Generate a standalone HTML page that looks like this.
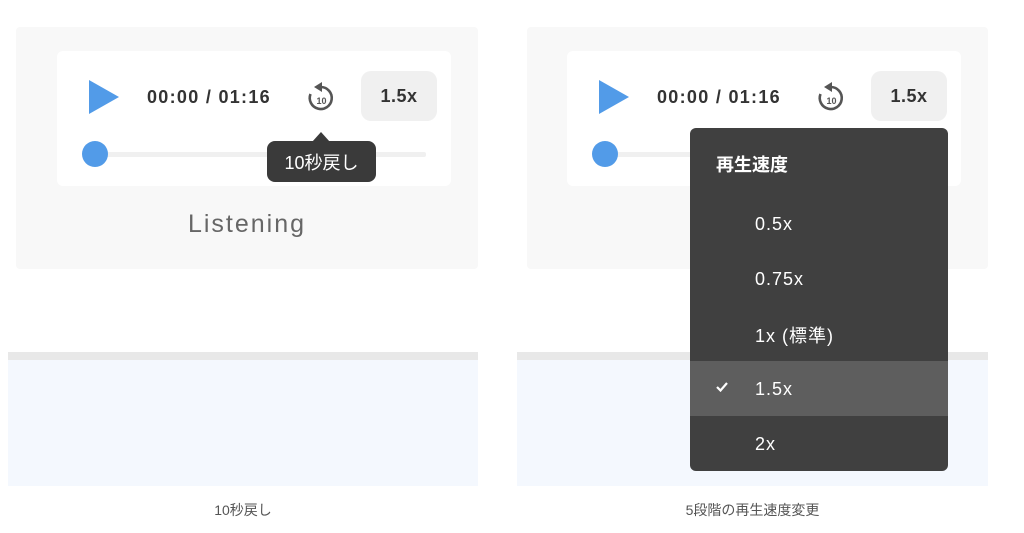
<!DOCTYPE html>
<html><head><meta charset="utf-8"><style>
*{margin:0;padding:0;box-sizing:border-box}
body{width:1024px;height:533px;background:#fff;position:relative;overflow:hidden;font-family:"Liberation Sans","Noto Sans CJK JP",sans-serif}
.a{position:absolute}
.outer{background:#f8f8f8;border-radius:4px}
.card{background:#fff;border-radius:6px}
.time{font-weight:bold;font-size:18px;color:#333;white-space:nowrap;letter-spacing:1.3px}
.spd{background:#f0f0f0;border-radius:10px;font-weight:bold;font-size:18px;color:#333;display:flex;align-items:center;justify-content:center;letter-spacing:0.5px}
.track{background:#f0f0f0;height:5px;border-radius:2px}
.thumb{width:26px;height:26px;border-radius:50%;background:#529be8}
.cap{font-size:14px;color:#555;text-align:center}
.menu{background:#404040;border-radius:6px;color:#fff}
.it{position:absolute;left:65px;font-size:18px;letter-spacing:1px}
</style></head><body>
<!-- left -->
<div class="a outer" style="left:16px;top:27px;width:462px;height:242px"></div>
<div class="a card" style="left:57px;top:51px;width:394px;height:135px"></div>
<svg class="a" style="left:88px;top:80px" width="31" height="35"><polygon points="1,0 31,17 1,34" fill="#529be8"/></svg>
<div class="a time" style="left:147px;top:87px">00:00 / 01:16</div>
<svg class="a" style="left:305px;top:81px" width="32" height="32" viewBox="0 0 32 32"><path d="M16 6 A11 11 0 1 1 5.5 13" fill="none" stroke="#555" stroke-width="2.6"/><polygon points="9,6 17,1 17,11" fill="#555"/><text x="16.5" y="23" font-size="9" font-weight="bold" fill="#555" text-anchor="middle" font-family="Liberation Sans">10</text></svg>
<div class="a spd" style="left:361px;top:71px;width:76px;height:50px">1.5x</div>
<div class="a track" style="left:95px;top:152px;width:331px"></div>
<div class="a thumb" style="left:82px;top:141px"></div>
<svg class="a" style="left:312px;top:132px" width="18" height="10"><polygon points="9,0 18,10 0,10" fill="#3a3a3a"/></svg>
<div class="a" style="left:267px;top:141px;width:109px;height:41px;background:#3a3a3a;border-radius:8px;color:#fff;font-size:18px;display:flex;align-items:center;justify-content:center">10秒戻し</div>
<div class="a" style="left:16px;top:210px;width:462px;text-align:center;font-size:25px;color:#666;letter-spacing:2px">Listening</div>
<div class="a" style="left:8px;top:352px;width:470px;height:8px;background:#e8e8e8"></div>
<div class="a" style="left:8px;top:360px;width:470px;height:126px;background:#f4f8fe"></div>
<div class="a cap" style="left:8px;top:500px;width:470px">10秒戻し</div>
<!-- right -->
<div class="a outer" style="left:527px;top:27px;width:461px;height:242px"></div>
<div class="a card" style="left:567px;top:51px;width:394px;height:135px"></div>
<svg class="a" style="left:598px;top:80px" width="31" height="35"><polygon points="1,0 31,17 1,34" fill="#529be8"/></svg>
<div class="a time" style="left:657px;top:87px">00:00 / 01:16</div>
<svg class="a" style="left:815px;top:81px" width="32" height="32" viewBox="0 0 32 32"><path d="M16 6 A11 11 0 1 1 5.5 13" fill="none" stroke="#555" stroke-width="2.6"/><polygon points="9,6 17,1 17,11" fill="#555"/><text x="16.5" y="23" font-size="9" font-weight="bold" fill="#555" text-anchor="middle" font-family="Liberation Sans">10</text></svg>
<div class="a spd" style="left:871px;top:71px;width:76px;height:50px">1.5x</div>
<div class="a track" style="left:605px;top:152px;width:331px"></div>
<div class="a thumb" style="left:592px;top:141px"></div>
<div class="a" style="left:517px;top:352px;width:471px;height:8px;background:#e8e8e8"></div>
<div class="a" style="left:517px;top:360px;width:471px;height:126px;background:#f4f8fe"></div>
<div class="a cap" style="left:517px;top:500px;width:471px">5段階の再生速度変更</div>
<div class="a menu" style="left:690px;top:128px;width:258px;height:343px">
<div class="a" style="left:26px;top:23px;font-size:18px;font-weight:bold">再生速度</div>
<div class="it" style="top:86px">0.5x</div>
<div class="it" style="top:141px">0.75x</div>
<div class="it" style="top:194px">1x (標準)</div>
<div class="a" style="left:0;top:233px;width:258px;height:55px;background:#5e5e5e"></div>
<svg class="a" style="left:26px;top:254px" width="12" height="10"><path d="M1 5 L4.5 8.5 L11 1" fill="none" stroke="#fff" stroke-width="2.2"/></svg>
<div class="it" style="top:251px">1.5x</div>
<div class="it" style="top:306px">2x</div>
</div>
</body></html>
